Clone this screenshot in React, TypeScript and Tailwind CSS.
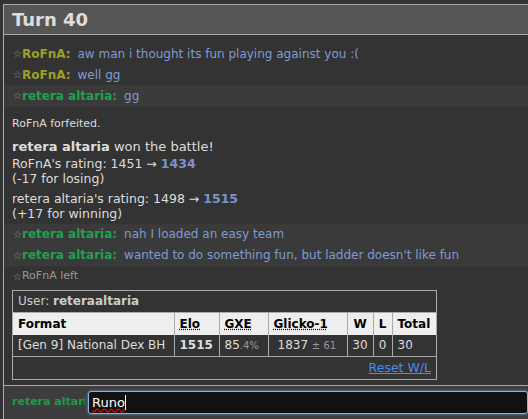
import React from 'react';

const font = { fontFamily: '"DejaVu Sans", Verdana, sans-serif' };

const Star = () => <span className="text-[10px] text-[#999]">☆</span>;

const ChatLine = ({ name, color, msg, hl }: { name: string; color: string; msg: string; hl?: boolean }) => (
  <div className={`h-[21px] flex items-center pl-[9px] text-[12px] ${hl ? 'bg-[#3a3a3a]' : ''}`}>
    <Star />
    <strong className={`${color} mr-[7px]`}>{name}:</strong>
    <span className="text-[#7f9bd0]">{msg}</span>
  </div>
);

const App = () => {
  return (
    <div className="w-[528px] h-[419px] bg-[#333] overflow-hidden flex flex-col" style={font}>
      <div className="h-[4px] bg-[#333]" />
      <div className="flex-1 ml-[3px] border-l border-t border-[#aaa] flex flex-col min-h-0">
        <div className="h-[30px] bg-[#555] border-b border-[#aaa] flex items-center pl-[8px]">
          <h2 className="text-[18px] font-bold text-[#ddd]">Turn 40</h2>
        </div>
        <div className="flex-1 bg-[#333] pt-[8px]">
          <ChatLine name="RoFnA" color="text-[#9ca126]" msg="aw man i thought its fun playing against you :(" />
          <ChatLine name="RoFnA" color="text-[#9ca126]" msg="well gg" />
          <ChatLine name="retera altaria" color="text-[#22a050]" msg="gg" hl />
          <div className="pl-[8px] pt-[10px] text-[11px] text-[#ddd]">RoFnA forfeited.</div>
          <div className="pl-[8px] pt-[5px] text-[12.5px] text-[#ddd] leading-[15px]">
            <div className="text-[13px] leading-[18px]">
              <strong>retera altaria</strong> won the battle!
            </div>
            <div>
              RoFnA's rating: 1451 → <strong className="text-[#7e92c8]">1434</strong>
            </div>
            <div>(-17 for losing)</div>
            <div className="mt-[5px]">
              retera altaria's rating: 1498 → <strong className="text-[#7e92c8]">1515</strong>
            </div>
            <div>(+17 for winning)</div>
          </div>
          <div className="mt-[3px]">
            <ChatLine name="retera altaria" color="text-[#22a050]" msg="nah I loaded an easy team" hl />
            <ChatLine name="retera altaria" color="text-[#22a050]" msg="wanted to do something fun, but ladder doesn't like fun" hl />
          </div>
          <div className="pl-[9px] h-[22px] flex items-center text-[11px] text-[#999]">
            <Star />
            RoFnA left
          </div>
          <div className="ml-[8px] mt-[2px] w-[425px] border border-[#aaa] text-[12px]">
            <div className="h-[22px] flex items-center pl-[5px] border-b border-[#aaa] text-[#ccc]">
              User:&nbsp;<strong>reteraaltaria</strong>
            </div>
            <table className="w-full border-collapse">
              <thead>
                <tr className="bg-[#eee] text-black h-[22px]">
                  <th className="text-left pl-[5px] w-[161px] border-r border-[#aaa]">Format</th>
                  <th className="text-left pl-[5px] w-[45px] border-r border-[#aaa]">
                    <abbr className="underline decoration-dotted">Elo</abbr>
                  </th>
                  <th className="text-left pl-[5px] w-[49px] border-r border-[#aaa]">
                    <abbr className="underline decoration-dotted">GXE</abbr>
                  </th>
                  <th className="text-left pl-[5px] w-[79px] border-r border-[#aaa]">
                    <abbr className="underline decoration-dotted">Glicko-1</abbr>
                  </th>
                  <th className="text-center w-[26px] border-r border-[#aaa]">W</th>
                  <th className="text-center w-[19px] border-r border-[#aaa]">L</th>
                  <th className="text-left pl-[5px]">Total</th>
                </tr>
              </thead>
              <tbody>
                <tr className="h-[22px] text-[#ddd] border-b border-[#aaa]">
                  <td className="pl-[5px] border-r border-[#aaa] whitespace-nowrap">[Gen 9] National Dex BH</td>
                  <td className="pl-[5px] border-r border-[#aaa] font-bold">1515</td>
                  <td className="pl-[5px] border-r border-[#aaa]">
                    85<span className="text-[10px] text-[#999]">.4%</span>
                  </td>
                  <td className="pl-[9px] border-r border-[#aaa]">
                    1837 <span className="text-[10px] text-[#999]">± 61</span>
                  </td>
                  <td className="text-center border-r border-[#aaa]">30</td>
                  <td className="text-center border-r border-[#aaa]">0</td>
                  <td className="pl-[5px]">30</td>
                </tr>
              </tbody>
            </table>
            <div className="h-[22px] flex items-center justify-end pr-[5px]">
              <a className="text-[#4b8cf0] underline text-[12.5px]">Reset W/L</a>
            </div>
          </div>
        </div>
        <div className="h-[34px] border-t border-[#aaa] bg-[#3d3d3d] flex items-center pl-[8px]">
          <strong className="text-[11px] text-[#1f9a4a] w-[73px] shrink-0 overflow-hidden whitespace-nowrap">
            retera altaria
          </strong>
          <div className="ml-[3px] flex-1 h-[23px] bg-[#111] border border-[#8ab4dd] rounded-[3px] shadow-[0_0_3px_#6a9cd0] flex items-center pl-[3px] text-[13px] text-white">
            <span className="underline decoration-wavy decoration-red-600">Runo</span>
            <span className="w-px h-[15px] bg-white" />
          </div>
        </div>
      </div>
    </div>
  );
};

export default App;
